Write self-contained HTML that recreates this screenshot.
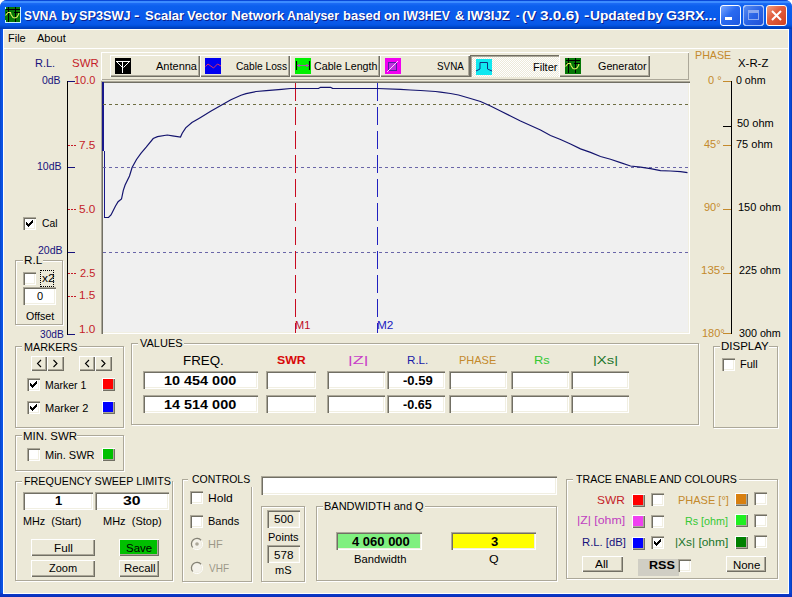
<!DOCTYPE html>
<html><head><meta charset="utf-8"><style>
html,body{margin:0;padding:0;width:792px;height:597px;overflow:hidden;background:#fff}
body{position:relative;font-family:"Liberation Sans",sans-serif}
div{position:absolute;box-sizing:border-box}
.t{white-space:pre;font-family:"Liberation Sans",sans-serif}
svg{position:absolute;overflow:visible}
</style></head><body>
<div style="left:0;top:0;width:792px;height:597px;background:#0A46D8;border-radius:7px 7px 0 0"></div>
<div style="left:0;top:0;width:792px;height:29px;border-radius:7px 7px 0 0;background:linear-gradient(to bottom,#0A48D8 0px,#0A48D8 1px,#3C8CFF 1px,#3C8CFF 3px,#1E6CF6 3px,#0C60EE 6px,#0A5CEC 14px,#0858E8 24px,#0050DC 26px,#0046C8 27px,#003CB4 29px)"></div>
<div style="left:0;top:29px;width:4px;height:568px;background:linear-gradient(to right,#0843C8,#0A55E8 2px,#0A52E3 3px)"></div>
<div style="left:788px;top:29px;width:4px;height:568px;background:linear-gradient(to right,#0A52E3,#0A4FE0 2px,#0638B8)"></div>
<div style="left:0;top:593px;width:792px;height:4px;background:linear-gradient(to bottom,#0A3ED0,#0A2FB8)"></div>
<div style="left:3px;top:29px;width:786px;height:565px;background:#fff"></div>
<div style="left:4px;top:30px;width:784px;height:563px;background:#ECE9D8"></div>
<svg width="16" height="16" viewBox="0 0 16 16" shape-rendering="crispEdges" style="left:5px;top:7px">
<rect x="0" y="0" width="16" height="16" fill="#067806"/>
<rect x="0" y="15" width="16" height="1" fill="#C8F0FF"/><rect x="15" y="0" width="1" height="16" fill="#C8F0FF"/><rect x="0" y="0" width="1" height="2" fill="#C8F0FF"/><rect x="0" y="13" width="1" height="3" fill="#C8F0FF"/>
<rect x="3" y="0" width="1" height="15" fill="#000"/><rect x="10" y="0" width="1" height="15" fill="#000"/>
<rect x="1" y="2" width="14" height="1" fill="#000"/><rect x="1" y="5" width="3" height="1" fill="#000"/><rect x="9" y="5" width="6" height="1" fill="#000"/>
<path d="M0.5 8.5 L3 5.5 L5.5 5.5 L6 7.5 L8 10.5 L10 11 L12 10 L13.5 7.5 L14 6" fill="none" stroke="#E0F060" stroke-width="1.1" shape-rendering="auto"/>
</svg>
<div class="t" style="left:24.09px;top:6px;color:#fff;font-size:13px;line-height:20px;font-weight:bold;transform:scaleX(0.9143);transform-origin:0 0;text-shadow:1px 1px #0A1E8C;">SVNA</div>
<div class="t" style="left:60.93px;top:6px;color:#fff;font-size:13px;line-height:20px;font-weight:bold;transform:scaleX(1.0714);transform-origin:0 0;text-shadow:1px 1px #0A1E8C;">by</div>
<div class="t" style="left:79.02px;top:6px;color:#fff;font-size:13px;line-height:20px;font-weight:bold;transform:scaleX(0.9804);transform-origin:0 0;text-shadow:1px 1px #0A1E8C;">SP3SWJ</div>
<div class="t" style="left:134.00px;top:6px;color:#fff;font-size:13px;line-height:20px;font-weight:bold;transform:scaleX(1.2500);transform-origin:0 0;text-shadow:1px 1px #0A1E8C;">-</div>
<div class="t" style="left:145.00px;top:6px;color:#fff;font-size:13px;line-height:20px;font-weight:bold;text-shadow:1px 1px #0A1E8C;">Scalar</div>
<div class="t" style="left:187.00px;top:6px;color:#fff;font-size:13px;line-height:20px;font-weight:bold;text-shadow:1px 1px #0A1E8C;">Vector</div>
<div class="t" style="left:230.96px;top:6px;color:#fff;font-size:13px;line-height:20px;font-weight:bold;transform:scaleX(1.0400);transform-origin:0 0;text-shadow:1px 1px #0A1E8C;">Network</div>
<div class="t" style="left:287.00px;top:6px;color:#fff;font-size:13px;line-height:20px;font-weight:bold;transform:scaleX(0.9455);transform-origin:0 0;text-shadow:1px 1px #0A1E8C;">Analyser</div>
<div class="t" style="left:343.00px;top:6px;color:#fff;font-size:13px;line-height:20px;font-weight:bold;text-shadow:1px 1px #0A1E8C;">based</div>
<div class="t" style="left:384.00px;top:6px;color:#fff;font-size:13px;line-height:20px;font-weight:bold;text-shadow:1px 1px #0A1E8C;">on</div>
<div class="t" style="left:403.06px;top:6px;color:#fff;font-size:13px;line-height:20px;font-weight:bold;transform:scaleX(0.9388);transform-origin:0 0;text-shadow:1px 1px #0A1E8C;">IW3HEV</div>
<div class="t" style="left:455.00px;top:6px;color:#fff;font-size:13px;line-height:20px;font-weight:bold;text-shadow:1px 1px #0A1E8C;">&amp;</div>
<div class="t" style="left:466.98px;top:6px;color:#fff;font-size:13px;line-height:20px;font-weight:bold;transform:scaleX(1.0244);transform-origin:0 0;text-shadow:1px 1px #0A1E8C;">IW3IJZ</div>
<div class="t" style="left:516.00px;top:6px;color:#fff;font-size:13px;line-height:20px;font-weight:bold;transform:scaleX(0.7500);transform-origin:0 0;text-shadow:1px 1px #0A1E8C;">-</div>
<div class="t" style="left:521.92px;top:6px;color:#fff;font-size:13px;line-height:20px;font-weight:bold;transform:scaleX(1.0833);transform-origin:0 0;text-shadow:1px 1px #0A1E8C;">(V</div>
<div class="t" style="left:540.00px;top:6px;color:#fff;font-size:13px;line-height:20px;font-weight:bold;transform:scaleX(1.1818);transform-origin:0 0;text-shadow:1px 1px #0A1E8C;">3.0.6)</div>
<div class="t" style="left:584.00px;top:6px;color:#fff;font-size:13px;line-height:20px;font-weight:bold;transform:scaleX(1.2500);transform-origin:0 0;text-shadow:1px 1px #0A1E8C;">-</div>
<div class="t" style="left:589.94px;top:6px;color:#fff;font-size:13px;line-height:20px;font-weight:bold;transform:scaleX(1.0600);transform-origin:0 0;text-shadow:1px 1px #0A1E8C;">Updated</div>
<div class="t" style="left:646.93px;top:6px;color:#fff;font-size:13px;line-height:20px;font-weight:bold;transform:scaleX(1.0714);transform-origin:0 0;text-shadow:1px 1px #0A1E8C;">by</div>
<div class="t" style="left:666.00px;top:6px;color:#fff;font-size:13px;line-height:20px;font-weight:bold;transform:scaleX(1.0889);transform-origin:0 0;text-shadow:1px 1px #0A1E8C;">G3RX...</div>
<div style="left:720px;top:5px;width:21px;height:21px;border:1px solid #fff;border-radius:3px;background:linear-gradient(135deg,#7AA8FF 0%,#2A6AF0 45%,#1E58E0 100%)"></div>
<div style="left:743px;top:5px;width:21px;height:21px;border:1px solid #fff;border-radius:3px;background:linear-gradient(135deg,#5A8CF0 0%,#2A64E6 50%,#2050D8 100%)"></div>
<div style="left:766px;top:5px;width:21px;height:21px;border:1px solid #fff;border-radius:3px;background:linear-gradient(135deg,#F0A080 0%,#E26040 40%,#D04020 100%)"></div>
<div style="left:743px;top:5px;width:21px;height:21px;border:1px solid #A8C4F8;border-radius:3px"></div>
<div style="left:725px;top:17px;width:7px;height:3px;background:#fff"></div>
<div style="left:748px;top:10px;width:11px;height:10px;border:1px solid #8CAAF0;border-top:3px solid #8CAAF0"></div>
<svg width="21" height="21" style="left:766px;top:5px"><path d="M6 6 L15 15 M15 6 L6 15" stroke="#fff" stroke-width="2"/></svg>
<div class="t" style="left:8.00px;top:28px;color:#000;font-size:11px;line-height:20px;">File</div>
<div class="t" style="left:37.00px;top:28px;color:#000;font-size:11px;line-height:20px;">About</div>
<div style="left:4px;top:48px;width:784px;height:1px;background:#fff"></div>
<div class="t" style="left:35.00px;top:53px;color:#16127C;font-size:11px;line-height:20px;">R.L.</div>
<div class="t" style="left:71.96px;top:53px;color:#C41C28;font-size:11px;line-height:20px;transform:scaleX(1.0417);transform-origin:0 0;">SWR</div>
<div style="left:67px;top:81px;width:1px;height:254px;background:#000"></div>
<div style="left:68px;top:81px;width:7px;height:1px;background:#16127C"></div>
<div class="t" style="left:42.00px;top:70px;color:#16127C;font-size:11px;line-height:20px;transform:scaleX(0.9474);transform-origin:0 0;">0dB</div>
<div class="t" style="left:74.00px;top:70px;color:#C41C28;font-size:11px;line-height:20px;">10.0</div>
<div style="left:68px;top:167px;width:7px;height:1px;background:#16127C"></div>
<div class="t" style="left:37.04px;top:156px;color:#16127C;font-size:11px;line-height:20px;transform:scaleX(0.9583);transform-origin:0 0;">10dB</div>
<div style="left:68px;top:145px;width:8px;height:1px;background:repeating-linear-gradient(to right,#C41C28 0 2px,transparent 2px 3px)"></div>
<div class="t" style="left:78.93px;top:135px;color:#C41C28;font-size:11px;line-height:20px;transform:scaleX(1.0714);transform-origin:0 0;">7.5</div>
<div style="left:68px;top:209px;width:8px;height:1px;background:repeating-linear-gradient(to right,#C41C28 0 2px,transparent 2px 3px)"></div>
<div class="t" style="left:78.93px;top:199px;color:#C41C28;font-size:11px;line-height:20px;transform:scaleX(1.0714);transform-origin:0 0;">5.0</div>
<div style="left:68px;top:252px;width:7px;height:1px;background:#16127C"></div>
<div class="t" style="left:38.00px;top:240px;color:#16127C;font-size:11px;line-height:20px;transform:scaleX(0.9600);transform-origin:0 0;">20dB</div>
<div style="left:68px;top:273px;width:8px;height:1px;background:repeating-linear-gradient(to right,#C41C28 0 2px,transparent 2px 3px)"></div>
<div class="t" style="left:80.00px;top:263px;color:#C41C28;font-size:11px;line-height:20px;">2.5</div>
<div style="left:68px;top:296px;width:8px;height:1px;background:repeating-linear-gradient(to right,#C41C28 0 2px,transparent 2px 3px)"></div>
<div class="t" style="left:78.93px;top:285px;color:#C41C28;font-size:11px;line-height:20px;transform:scaleX(1.0714);transform-origin:0 0;">1.5</div>
<div class="t" style="left:78.93px;top:319px;color:#C41C28;font-size:11px;line-height:20px;transform:scaleX(1.0714);transform-origin:0 0;">1.0</div>
<div style="left:68px;top:334px;width:7px;height:1px;background:#16127C"></div>
<div class="t" style="left:40.00px;top:324px;color:#16127C;font-size:11px;line-height:20px;transform:scaleX(0.9200);transform-origin:0 0;">30dB</div>
<div style="left:23px;top:217px;width:13px;height:13px;background:#fff;box-shadow:inset 1px 1px #ACA899, inset 2px 2px #716F64, inset -1px -1px #fff, inset -2px -2px #F1EFE2;"><svg width="13" height="13" style="position:absolute;left:0;top:0" shape-rendering="crispEdges"><path fill="#000" d="M9 3h1v1h-1zM8 4h1v1h-1zM9 4h1v1h-1zM3 5h1v1h-1zM7 5h1v1h-1zM8 5h1v1h-1zM9 5h1v1h-1zM3 6h1v1h-1zM4 6h1v1h-1zM6 6h1v1h-1zM7 6h1v1h-1zM8 6h1v1h-1zM3 7h1v1h-1zM4 7h1v1h-1zM5 7h1v1h-1zM6 7h1v1h-1zM7 7h1v1h-1zM4 8h1v1h-1zM5 8h1v1h-1zM6 8h1v1h-1zM5 9h1v1h-1z"/></svg></div>
<div class="t" style="left:42.00px;top:213px;color:#000;font-size:11px;line-height:20px;transform:scaleX(0.9375);transform-origin:0 0;">Cal</div>
<div style="left:15px;top:260px;width:48px;height:65px;border:1px solid #ACA899;"></div>
<div style="left:16px;top:261px;width:48px;height:65px;border:1px solid #fff;"></div>
<div style="left:15px;top:260px;width:48px;height:65px;border:1px solid #ACA899;border-right:0;border-bottom:0"></div>
<div style="left:62px;top:260px;width:1px;height:65px;background:#ACA899"></div>
<div style="left:15px;top:324px;width:48px;height:1px;background:#ACA899"></div>
<div style="left:23px;top:255px;width:20px;height:13px;background:#ECE9D8"></div>
<div class="t" style="left:23.94px;top:250px;color:#000;font-size:11px;line-height:20px;transform:scaleX(1.0625);transform-origin:0 0;">R.L</div>
<div style="left:23px;top:272px;width:13px;height:13px;background:#fff;box-shadow:inset 1px 1px #ACA899, inset 2px 2px #716F64, inset -1px -1px #fff, inset -2px -2px #F1EFE2;"></div>
<div class="t" style="left:42.00px;top:268px;color:#000;font-size:11px;line-height:20px;transform:scaleX(1.0909);transform-origin:0 0;">x2</div>
<div style="left:40px;top:270px;width:14px;height:17px;border:1px dotted #000"></div>
<div style="left:23px;top:287px;width:33px;height:18px;background:#fff;box-shadow:inset 1px 1px #ACA899, inset 2px 2px #716F64, inset -1px -1px #fff, inset -2px -2px #F1EFE2;"></div>
<div class="t" style="left:37.00px;top:286px;color:#000;font-size:11px;line-height:20px;">0</div>
<div class="t" style="left:26.00px;top:306px;color:#000;font-size:11px;line-height:20px;transform:scaleX(0.9655);transform-origin:0 0;">Offset</div>
<div style="left:101px;top:52px;width:588px;height:28px;box-shadow:inset 1px 1px #fff, inset -1px -1px #ACA899;"></div>
<div style="left:110px;top:55px;width:90px;height:22px;background:#ECE9D8;box-shadow:inset 1px 1px #fff, inset -1px -1px #716F64, inset -2px -2px #ACA899;"></div>
<svg width="16" height="16" style="left:115px;top:58px" shape-rendering="crispEdges"><rect width="16" height="16" fill="#000"/><path d="M1 3.5H15M1.5 3.5L7.5 9.5M14.5 3.5L8.5 9.5M7.5 3V15" stroke="#fff" stroke-width="1" fill="none" shape-rendering="auto"/></svg>
<div class="t" style="left:156.00px;top:56px;color:#000;font-size:11px;line-height:20px;">Antenna</div>
<div style="left:200px;top:55px;width:90px;height:22px;background:#ECE9D8;box-shadow:inset 1px 1px #fff, inset -1px -1px #716F64, inset -2px -2px #ACA899;"></div>
<svg width="16" height="16" style="left:205px;top:58px"><rect width="16" height="16" fill="#0000F0"/><path d="M0.5 8.5L3 6L8.5 10L12.5 6L16 8" stroke="#E03060" stroke-width="1" fill="none"/></svg>
<div class="t" style="left:236.00px;top:56px;color:#000;font-size:11px;line-height:20px;transform:scaleX(0.9273);transform-origin:0 0;">Cable Loss</div>
<div style="left:290px;top:55px;width:90px;height:22px;background:#ECE9D8;box-shadow:inset 1px 1px #fff, inset -1px -1px #716F64, inset -2px -2px #ACA899;"></div>
<svg width="16" height="16" style="left:295px;top:58px"><rect width="16" height="16" fill="#00F000"/><path d="M1.5 3V12M14.5 3V12" stroke="#000" stroke-width="1.2"/><path d="M2 7.5H14" stroke="#A060A0" stroke-width="1"/><circle cx="4" cy="7.5" r="1.3" fill="#C040C0"/><circle cx="12" cy="7.5" r="1.3" fill="#C040C0"/></svg>
<div class="t" style="left:314.00px;top:56px;color:#000;font-size:11px;line-height:20px;transform:scaleX(0.9692);transform-origin:0 0;">Cable Length</div>
<div style="left:380px;top:55px;width:90px;height:22px;background:#ECE9D8;box-shadow:inset 1px 1px #fff, inset -1px -1px #716F64, inset -2px -2px #ACA899;"></div>
<svg width="16" height="16" style="left:385px;top:58px"><rect width="16" height="16" fill="#F000F0"/><rect x="3.5" y="4.5" width="8" height="8" fill="#C030E0" stroke="#5020A0" stroke-width="1"/><path d="M2 14L13 3" stroke="#FFD0FF" stroke-width="1"/></svg>
<div class="t" style="left:437.10px;top:56px;color:#000;font-size:11px;line-height:20px;transform:scaleX(0.8966);transform-origin:0 0;">SVNA</div>
<div style="left:470px;top:55px;width:89px;height:22px;background:repeating-conic-gradient(#fff 0 25%, #ECE9D8 0 50%) 0 0/2px 2px;box-shadow:inset 1px 1px #716F64, inset 2px 2px #ACA899;"></div>
<svg width="16" height="16" style="left:476px;top:59px"><rect width="16" height="16" fill="#10E8F0"/><path d="M0 12L4 10V3.5H11.5V10L16 12" stroke="#103080" stroke-width="1" fill="none"/></svg>
<div class="t" style="left:533.00px;top:57px;color:#000;font-size:11px;line-height:20px;">Filter</div>
<div style="left:559px;top:55px;width:91px;height:22px;background:#ECE9D8;box-shadow:inset 1px 1px #fff, inset -1px -1px #716F64, inset -2px -2px #ACA899;"></div>
<svg width="16" height="16" viewBox="0 0 16 16" shape-rendering="crispEdges" style="left:565px;top:58px">
<rect x="0" y="0" width="16" height="16" fill="#067806"/>

<rect x="3" y="0" width="1" height="15" fill="#000"/><rect x="10" y="0" width="1" height="15" fill="#000"/>
<rect x="1" y="2" width="14" height="1" fill="#000"/><rect x="1" y="5" width="3" height="1" fill="#000"/><rect x="9" y="5" width="6" height="1" fill="#000"/>
<path d="M0.5 8.5 L3 5.5 L5.5 5.5 L6 7.5 L8 10.5 L10 11 L12 10 L13.5 7.5 L14 6" fill="none" stroke="#E0F060" stroke-width="1.1" shape-rendering="auto"/>
</svg>
<div class="t" style="left:598.00px;top:56px;color:#000;font-size:11px;line-height:20px;transform:scaleX(0.9796);transform-origin:0 0;">Generator</div>
<div style="left:101px;top:81px;width:589px;height:253px;background:#F0F0F0;box-shadow:inset 1px 1px #ACA899, inset 2px 2px #716F64, inset -1px -1px #fff, inset -2px -2px #F1EFE2;"></div>
<div style="left:102px;top:82px;width:2px;height:69px;background:#18188A"></div>
<div style="left:104px;top:151px;width:1px;height:67px;background:#18188A"></div>
<svg width="792" height="597" style="left:0;top:0">
<line x1="103" y1="104.5" x2="688" y2="104.5" stroke="#6E6E42" stroke-dasharray="3 3"/>
<line x1="103" y1="167.5" x2="688" y2="167.5" stroke="#6A66A8" stroke-dasharray="3 3"/>
<line x1="103" y1="252.5" x2="688" y2="252.5" stroke="#6A66A8" stroke-dasharray="3 3"/>
<line x1="295.5" y1="83" x2="295.5" y2="333" stroke="#C80A20" stroke-dasharray="18 6"/>
<line x1="377.5" y1="83" x2="377.5" y2="333" stroke="#2020C0" stroke-dasharray="18 6"/>
<polyline points="104.5,217.5 108.5,217.5 111.0,215.0 115.5,206.0 118.1,201.7 121.5,199.0 123.3,190.3 125.1,185.0 129.5,176.0 132.1,167.5 136.5,159.5 140.9,153.4 146.2,147.2 153.2,138.5 157.5,136.7 167.3,135.0 172.5,135.8 180.5,137.0 182.2,133.2 185.7,127.9 191.9,122.6 196.3,120.0 200.6,117.4 210.7,111.3 220.8,105.4 230.9,99.7 241.0,95.3 246.1,93.6 256.2,91.5 266.3,90.6 281.5,89.3 290.5,88.5 318.5,88.5 320.5,87.3 330.5,87.3 332.5,88.3 377.5,88.5 400.5,89.3 410.5,90.0 420.5,90.5 435.5,91.5 440.5,92.2 450.5,93.5 458.5,95.0 470.5,98.5 480.5,101.5 490.5,106.0 500.5,111.0 510.5,116.0 520.5,121.0 530.5,125.5 540.5,130.0 550.5,135.5 560.5,139.5 570.5,144.0 580.5,148.9 590.5,152.4 600.5,156.5 610.5,159.2 620.5,162.6 630.5,166.0 640.5,167.1 650.5,168.6 660.5,170.6 670.5,171.0 680.5,171.7 687.5,172.6" fill="none" stroke="#14146E" stroke-width="1.2"/>
</svg>
<div class="t" style="left:295.00px;top:315px;color:#BE0A1E;font-size:11px;line-height:20px;">M1</div>
<div class="t" style="left:376.93px;top:315px;color:#2020C0;font-size:11px;line-height:20px;transform:scaleX(1.0714);transform-origin:0 0;">M2</div>
<div style="left:731px;top:81px;width:1px;height:253px;background:#000"></div>
<div style="left:723px;top:81px;width:8px;height:1px;background:#C48A2C"></div>
<div style="left:723px;top:145px;width:8px;height:1px;background:#C48A2C"></div>
<div style="left:723px;top:209px;width:8px;height:1px;background:#C48A2C"></div>
<div style="left:723px;top:273px;width:8px;height:1px;background:#C48A2C"></div>
<div style="left:723px;top:333px;width:8px;height:1px;background:#C48A2C"></div>
<div style="left:723px;top:126px;width:8px;height:1px;background:#000"></div>
<div class="t" style="left:695.03px;top:45px;color:#C48A2C;font-size:11px;line-height:20px;transform:scaleX(0.9722);transform-origin:0 0;">PHASE</div>
<div class="t" style="left:738.00px;top:53px;color:#000;font-size:11px;line-height:20px;transform:scaleX(1.0345);transform-origin:0 0;">X-R-Z</div>
<div class="t" style="left:708.00px;top:70px;color:#C48A2C;font-size:11px;line-height:20px;">0 °</div>
<div class="t" style="left:736.00px;top:70px;color:#000;font-size:11px;line-height:20px;transform:scaleX(0.9667);transform-origin:0 0;">0 ohm</div>
<div class="t" style="left:737.00px;top:113px;color:#000;font-size:11px;line-height:20px;">50 ohm</div>
<div class="t" style="left:704.00px;top:134px;color:#C48A2C;font-size:11px;line-height:20px;">45°</div>
<div class="t" style="left:736.00px;top:134px;color:#000;font-size:11px;line-height:20px;">75 ohm</div>
<div class="t" style="left:704.00px;top:197px;color:#C48A2C;font-size:11px;line-height:20px;">90°</div>
<div class="t" style="left:738.00px;top:197px;color:#000;font-size:11px;line-height:20px;">150 ohm</div>
<div class="t" style="left:700.95px;top:260px;color:#C48A2C;font-size:11px;line-height:20px;transform:scaleX(1.0476);transform-origin:0 0;">135°</div>
<div class="t" style="left:739.00px;top:260px;color:#000;font-size:11px;line-height:20px;transform:scaleX(0.9762);transform-origin:0 0;">225 ohm</div>
<div class="t" style="left:702.00px;top:323px;color:#C48A2C;font-size:11px;line-height:20px;">180°</div>
<div class="t" style="left:739.00px;top:323px;color:#000;font-size:11px;line-height:20px;transform:scaleX(0.9762);transform-origin:0 0;">300 ohm</div>
<div style="left:15px;top:346px;width:109px;height:82px;border:1px solid #ACA899;"></div>
<div style="left:16px;top:347px;width:109px;height:82px;border:1px solid #fff;"></div>
<div style="left:15px;top:346px;width:109px;height:82px;border:1px solid #ACA899;border-right:0;border-bottom:0"></div>
<div style="left:123px;top:346px;width:1px;height:82px;background:#ACA899"></div>
<div style="left:15px;top:427px;width:109px;height:1px;background:#ACA899"></div>
<div style="left:22px;top:341px;width:57px;height:13px;background:#ECE9D8"></div>
<div class="t" style="left:24.02px;top:337px;color:#000;font-size:11px;line-height:20px;transform:scaleX(0.9811);transform-origin:0 0;">MARKERS</div>
<div style="left:31px;top:356px;width:16px;height:15px;background:#ECE9D8;box-shadow:inset 1px 1px #fff, inset -1px -1px #716F64, inset -2px -2px #ACA899;"></div>
<svg width="8" height="9" style="left:36px;top:359px"><path d="M5 1L1.5 4.5L5 8" stroke="#000" stroke-width="1.1" fill="none"/></svg>
<div style="left:47px;top:356px;width:17px;height:15px;background:#ECE9D8;box-shadow:inset 1px 1px #fff, inset -1px -1px #716F64, inset -2px -2px #ACA899;"></div>
<svg width="8" height="9" style="left:52px;top:359px"><path d="M1.5 1L5 4.5L1.5 8" stroke="#000" stroke-width="1.1" fill="none"/></svg>
<div style="left:79px;top:356px;width:16px;height:15px;background:#ECE9D8;box-shadow:inset 1px 1px #fff, inset -1px -1px #716F64, inset -2px -2px #ACA899;"></div>
<svg width="8" height="9" style="left:84px;top:359px"><path d="M5 1L1.5 4.5L5 8" stroke="#000" stroke-width="1.1" fill="none"/></svg>
<div style="left:95px;top:356px;width:17px;height:15px;background:#ECE9D8;box-shadow:inset 1px 1px #fff, inset -1px -1px #716F64, inset -2px -2px #ACA899;"></div>
<svg width="8" height="9" style="left:100px;top:359px"><path d="M1.5 1L5 4.5L1.5 8" stroke="#000" stroke-width="1.1" fill="none"/></svg>
<div style="left:27px;top:378px;width:13px;height:13px;background:#fff;box-shadow:inset 1px 1px #ACA899, inset 2px 2px #716F64, inset -1px -1px #fff, inset -2px -2px #F1EFE2;"><svg width="13" height="13" style="position:absolute;left:0;top:0" shape-rendering="crispEdges"><path fill="#000" d="M9 3h1v1h-1zM8 4h1v1h-1zM9 4h1v1h-1zM3 5h1v1h-1zM7 5h1v1h-1zM8 5h1v1h-1zM9 5h1v1h-1zM3 6h1v1h-1zM4 6h1v1h-1zM6 6h1v1h-1zM7 6h1v1h-1zM8 6h1v1h-1zM3 7h1v1h-1zM4 7h1v1h-1zM5 7h1v1h-1zM6 7h1v1h-1zM7 7h1v1h-1zM4 8h1v1h-1zM5 8h1v1h-1zM6 8h1v1h-1zM5 9h1v1h-1z"/></svg></div>
<div class="t" style="left:45.05px;top:375px;color:#000;font-size:11px;line-height:20px;transform:scaleX(0.9524);transform-origin:0 0;">Marker 1</div>
<div style="left:102px;top:378px;width:13px;height:13px;background:#FF0000;box-shadow:inset 1px 1px #fff, inset -1px -1px #716F64, inset -2px -2px #ACA899;"></div>
<div style="left:27px;top:401px;width:13px;height:13px;background:#fff;box-shadow:inset 1px 1px #ACA899, inset 2px 2px #716F64, inset -1px -1px #fff, inset -2px -2px #F1EFE2;"><svg width="13" height="13" style="position:absolute;left:0;top:0" shape-rendering="crispEdges"><path fill="#000" d="M9 3h1v1h-1zM8 4h1v1h-1zM9 4h1v1h-1zM3 5h1v1h-1zM7 5h1v1h-1zM8 5h1v1h-1zM9 5h1v1h-1zM3 6h1v1h-1zM4 6h1v1h-1zM6 6h1v1h-1zM7 6h1v1h-1zM8 6h1v1h-1zM3 7h1v1h-1zM4 7h1v1h-1zM5 7h1v1h-1zM6 7h1v1h-1zM7 7h1v1h-1zM4 8h1v1h-1zM5 8h1v1h-1zM6 8h1v1h-1zM5 9h1v1h-1z"/></svg></div>
<div class="t" style="left:45.00px;top:398px;color:#000;font-size:11px;line-height:20px;">Marker 2</div>
<div style="left:102px;top:401px;width:13px;height:13px;background:#0000FF;box-shadow:inset 1px 1px #fff, inset -1px -1px #716F64, inset -2px -2px #ACA899;"></div>
<div style="left:15px;top:435px;width:109px;height:36px;border:1px solid #ACA899;"></div>
<div style="left:16px;top:436px;width:109px;height:36px;border:1px solid #fff;"></div>
<div style="left:15px;top:435px;width:109px;height:36px;border:1px solid #ACA899;border-right:0;border-bottom:0"></div>
<div style="left:123px;top:435px;width:1px;height:36px;background:#ACA899"></div>
<div style="left:15px;top:470px;width:109px;height:1px;background:#ACA899"></div>
<div style="left:22px;top:430px;width:55px;height:13px;background:#ECE9D8"></div>
<div class="t" style="left:22.96px;top:426px;color:#000;font-size:11px;line-height:20px;transform:scaleX(1.0400);transform-origin:0 0;">MIN. SWR</div>
<div style="left:27px;top:448px;width:13px;height:13px;background:#fff;box-shadow:inset 1px 1px #ACA899, inset 2px 2px #716F64, inset -1px -1px #fff, inset -2px -2px #F1EFE2;"></div>
<div class="t" style="left:45.00px;top:445px;color:#000;font-size:11px;line-height:20px;">Min. SWR</div>
<div style="left:102px;top:448px;width:13px;height:13px;background:#00C000;box-shadow:inset 1px 1px #fff, inset -1px -1px #716F64, inset -2px -2px #ACA899;"></div>
<div style="left:15px;top:481px;width:158px;height:100px;border:1px solid #ACA899;"></div>
<div style="left:16px;top:482px;width:158px;height:100px;border:1px solid #fff;"></div>
<div style="left:15px;top:481px;width:158px;height:100px;border:1px solid #ACA899;border-right:0;border-bottom:0"></div>
<div style="left:172px;top:481px;width:1px;height:100px;background:#ACA899"></div>
<div style="left:15px;top:580px;width:158px;height:1px;background:#ACA899"></div>
<div style="left:22px;top:476px;width:150px;height:13px;background:#ECE9D8"></div>
<div class="t" style="left:24.02px;top:471px;color:#000;font-size:11px;line-height:20px;transform:scaleX(0.9799);transform-origin:0 0;">FREQUENCY SWEEP LIMITS</div>
<div style="left:23px;top:492px;width:70px;height:18px;background:#fff;box-shadow:inset 1px 1px #ACA899, inset 2px 2px #716F64, inset -1px -1px #fff, inset -2px -2px #F1EFE2;"></div>
<div class="t" style="left:55.00px;top:491px;color:#000;font-size:13px;line-height:20px;font-weight:bold;">1</div>
<div style="left:95px;top:492px;width:74px;height:18px;background:#fff;box-shadow:inset 1px 1px #ACA899, inset 2px 2px #716F64, inset -1px -1px #fff, inset -2px -2px #F1EFE2;"></div>
<div class="t" style="left:123.00px;top:491px;color:#000;font-size:13px;line-height:20px;font-weight:bold;transform:scaleX(1.2143);transform-origin:0 0;">30</div>
<div class="t" style="left:23.02px;top:511px;color:#000;font-size:11px;line-height:20px;transform:scaleX(0.9828);transform-origin:0 0;">MHz  (Start)</div>
<div class="t" style="left:103.00px;top:511px;color:#000;font-size:11px;line-height:20px;">MHz  (Stop)</div>
<div style="left:31px;top:539px;width:64px;height:17px;background:#ECE9D8;box-shadow:inset 1px 1px #fff, inset -1px -1px #716F64, inset -2px -2px #ACA899;"></div>
<div class="t" style="left:53.94px;top:538px;color:#000;font-size:11px;line-height:20px;transform:scaleX(1.0625);transform-origin:0 0;">Full</div>
<div style="left:31px;top:560px;width:64px;height:17px;background:#ECE9D8;box-shadow:inset 1px 1px #fff, inset -1px -1px #716F64, inset -2px -2px #ACA899;"></div>
<div class="t" style="left:49.00px;top:558px;color:#000;font-size:11px;line-height:20px;">Zoom</div>
<div style="left:119px;top:539px;width:40px;height:17px;background:#00C000;box-shadow:inset 1px 1px #fff, inset -1px -1px #716F64, inset -2px -2px #ACA899;"></div>
<div class="t" style="left:125.96px;top:538px;color:#000;font-size:11px;line-height:20px;transform:scaleX(1.0417);transform-origin:0 0;">Save</div>
<div style="left:119px;top:560px;width:40px;height:17px;background:#ECE9D8;box-shadow:inset 1px 1px #fff, inset -1px -1px #716F64, inset -2px -2px #ACA899;"></div>
<div class="t" style="left:123.97px;top:558px;color:#000;font-size:11px;line-height:20px;transform:scaleX(1.0345);transform-origin:0 0;">Recall</div>
<div style="left:131px;top:343px;width:568px;height:82px;border:1px solid #ACA899;"></div>
<div style="left:132px;top:344px;width:568px;height:82px;border:1px solid #fff;"></div>
<div style="left:131px;top:343px;width:568px;height:82px;border:1px solid #ACA899;border-right:0;border-bottom:0"></div>
<div style="left:698px;top:343px;width:1px;height:82px;background:#ACA899"></div>
<div style="left:131px;top:424px;width:568px;height:1px;background:#ACA899"></div>
<div style="left:138px;top:338px;width:46px;height:13px;background:#ECE9D8"></div>
<div class="t" style="left:140.00px;top:333px;color:#000;font-size:11px;line-height:20px;">VALUES</div>
<div class="t" style="left:182.97px;top:351px;color:#000;font-size:13px;line-height:20px;transform:scaleX(1.0263);transform-origin:0 0;">FREQ.</div>
<div class="t" style="left:277.00px;top:350px;color:#D80808;font-size:11px;line-height:20px;font-weight:bold;transform:scaleX(1.1200);transform-origin:0 0;">SWR</div>
<div class="t" style="left:348.36px;top:350px;color:#C83CC8;font-size:11px;line-height:20px;transform:scaleX(1.6364);transform-origin:0 0;">|Z|</div>
<div class="t" style="left:406.94px;top:350px;color:#1A1AA8;font-size:11px;line-height:20px;transform:scaleX(1.0556);transform-origin:0 0;">R.L.</div>
<div class="t" style="left:459.00px;top:350px;color:#C48A2C;font-size:11px;line-height:20px;">PHASE</div>
<div class="t" style="left:533.83px;top:350px;color:#34C834;font-size:11px;line-height:20px;transform:scaleX(1.1667);transform-origin:0 0;">Rs</div>
<div class="t" style="left:592.65px;top:350px;color:#187428;font-size:11px;line-height:20px;transform:scaleX(1.3529);transform-origin:0 0;">|Xs|</div>
<div style="left:143px;top:371px;width:115px;height:18px;background:#fff;box-shadow:inset 1px 1px #ACA899, inset 2px 2px #716F64, inset -1px -1px #fff, inset -2px -2px #F1EFE2;"></div>
<div style="left:266px;top:371px;width:50px;height:18px;background:#fff;box-shadow:inset 1px 1px #ACA899, inset 2px 2px #716F64, inset -1px -1px #fff, inset -2px -2px #F1EFE2;"></div>
<div style="left:327px;top:371px;width:58px;height:18px;background:#fff;box-shadow:inset 1px 1px #ACA899, inset 2px 2px #716F64, inset -1px -1px #fff, inset -2px -2px #F1EFE2;"></div>
<div style="left:387px;top:371px;width:58px;height:18px;background:#fff;box-shadow:inset 1px 1px #ACA899, inset 2px 2px #716F64, inset -1px -1px #fff, inset -2px -2px #F1EFE2;"></div>
<div style="left:449px;top:371px;width:58px;height:18px;background:#fff;box-shadow:inset 1px 1px #ACA899, inset 2px 2px #716F64, inset -1px -1px #fff, inset -2px -2px #F1EFE2;"></div>
<div style="left:511px;top:371px;width:58px;height:18px;background:#fff;box-shadow:inset 1px 1px #ACA899, inset 2px 2px #716F64, inset -1px -1px #fff, inset -2px -2px #F1EFE2;"></div>
<div style="left:571px;top:371px;width:58px;height:18px;background:#fff;box-shadow:inset 1px 1px #ACA899, inset 2px 2px #716F64, inset -1px -1px #fff, inset -2px -2px #F1EFE2;"></div>
<div style="left:143px;top:395px;width:115px;height:18px;background:#fff;box-shadow:inset 1px 1px #ACA899, inset 2px 2px #716F64, inset -1px -1px #fff, inset -2px -2px #F1EFE2;"></div>
<div style="left:266px;top:395px;width:50px;height:18px;background:#fff;box-shadow:inset 1px 1px #ACA899, inset 2px 2px #716F64, inset -1px -1px #fff, inset -2px -2px #F1EFE2;"></div>
<div style="left:327px;top:395px;width:58px;height:18px;background:#fff;box-shadow:inset 1px 1px #ACA899, inset 2px 2px #716F64, inset -1px -1px #fff, inset -2px -2px #F1EFE2;"></div>
<div style="left:387px;top:395px;width:58px;height:18px;background:#fff;box-shadow:inset 1px 1px #ACA899, inset 2px 2px #716F64, inset -1px -1px #fff, inset -2px -2px #F1EFE2;"></div>
<div style="left:449px;top:395px;width:58px;height:18px;background:#fff;box-shadow:inset 1px 1px #ACA899, inset 2px 2px #716F64, inset -1px -1px #fff, inset -2px -2px #F1EFE2;"></div>
<div style="left:511px;top:395px;width:58px;height:18px;background:#fff;box-shadow:inset 1px 1px #ACA899, inset 2px 2px #716F64, inset -1px -1px #fff, inset -2px -2px #F1EFE2;"></div>
<div style="left:571px;top:395px;width:58px;height:18px;background:#fff;box-shadow:inset 1px 1px #ACA899, inset 2px 2px #716F64, inset -1px -1px #fff, inset -2px -2px #F1EFE2;"></div>
<div class="t" style="left:163.89px;top:371px;color:#000;font-size:13px;line-height:20px;font-weight:bold;transform:scaleX(1.1094);transform-origin:0 0;">10 454 000</div>
<div class="t" style="left:163.89px;top:395px;color:#000;font-size:13px;line-height:20px;font-weight:bold;transform:scaleX(1.1094);transform-origin:0 0;">14 514 000</div>
<div class="t" style="left:403.00px;top:371px;color:#000;font-size:13px;line-height:20px;font-weight:bold;">-0.59</div>
<div class="t" style="left:403.00px;top:395px;color:#000;font-size:13px;line-height:20px;font-weight:bold;transform:scaleX(0.9667);transform-origin:0 0;">-0.65</div>
<div style="left:713px;top:346px;width:65px;height:82px;border:1px solid #ACA899;"></div>
<div style="left:714px;top:347px;width:65px;height:82px;border:1px solid #fff;"></div>
<div style="left:713px;top:346px;width:65px;height:82px;border:1px solid #ACA899;border-right:0;border-bottom:0"></div>
<div style="left:777px;top:346px;width:1px;height:82px;background:#ACA899"></div>
<div style="left:713px;top:427px;width:65px;height:1px;background:#ACA899"></div>
<div style="left:720px;top:341px;width:49px;height:13px;background:#ECE9D8"></div>
<div class="t" style="left:720.95px;top:336px;color:#000;font-size:11px;line-height:20px;transform:scaleX(1.0455);transform-origin:0 0;">DISPLAY</div>
<div style="left:722px;top:358px;width:13px;height:13px;background:#fff;box-shadow:inset 1px 1px #ACA899, inset 2px 2px #716F64, inset -1px -1px #fff, inset -2px -2px #F1EFE2;"></div>
<div class="t" style="left:740.00px;top:354px;color:#000;font-size:11px;line-height:20px;">Full</div>
<div style="left:182px;top:479px;width:70px;height:103px;border:1px solid #ACA899;"></div>
<div style="left:183px;top:480px;width:70px;height:103px;border:1px solid #fff;"></div>
<div style="left:182px;top:479px;width:70px;height:103px;border:1px solid #ACA899;border-right:0;border-bottom:0"></div>
<div style="left:251px;top:479px;width:1px;height:103px;background:#ACA899"></div>
<div style="left:182px;top:581px;width:70px;height:1px;background:#ACA899"></div>
<div style="left:188px;top:474px;width:67px;height:13px;background:#ECE9D8"></div>
<div class="t" style="left:192.00px;top:469px;color:#000;font-size:11px;line-height:20px;transform:scaleX(0.9508);transform-origin:0 0;">CONTROLS</div>
<div style="left:190px;top:491px;width:13px;height:13px;background:#fff;box-shadow:inset 1px 1px #ACA899, inset 2px 2px #716F64, inset -1px -1px #fff, inset -2px -2px #F1EFE2;"></div>
<div class="t" style="left:207.90px;top:488px;color:#000;font-size:11px;line-height:20px;transform:scaleX(1.0952);transform-origin:0 0;">Hold</div>
<div style="left:190px;top:515px;width:13px;height:13px;background:#fff;box-shadow:inset 1px 1px #ACA899, inset 2px 2px #716F64, inset -1px -1px #fff, inset -2px -2px #F1EFE2;"></div>
<div class="t" style="left:208.00px;top:511px;color:#000;font-size:11px;line-height:20px;">Bands</div>
<svg width="12" height="12" style="left:191px;top:538px"><circle cx="6" cy="6" r="4.5" fill="#F4F2EA"/><path d="M10.2 2.3A5.5 5.5 0 0 0 1.8 9.7" stroke="#716F64" stroke-width="1.2" fill="none" opacity="0.85"/><path d="M1.8 9.7A5.5 5.5 0 0 0 10.2 2.3" stroke="#fff" fill="none"/><circle cx="6" cy="6" r="1.8" fill="#ACA899"/></svg>
<div class="t" style="left:208.00px;top:534px;color:#9C9888;font-size:11px;line-height:20px;">HF</div>
<svg width="12" height="12" style="left:191px;top:562px"><circle cx="6" cy="6" r="4.5" fill="#F4F2EA"/><path d="M10.2 2.3A5.5 5.5 0 0 0 1.8 9.7" stroke="#716F64" stroke-width="1.2" fill="none" opacity="0.85"/><path d="M1.8 9.7A5.5 5.5 0 0 0 10.2 2.3" stroke="#fff" fill="none"/></svg>
<div class="t" style="left:209.00px;top:558px;color:#9C9888;font-size:11px;line-height:20px;transform:scaleX(0.9091);transform-origin:0 0;">VHF</div>
<div style="left:261px;top:476px;width:296px;height:19px;background:#fff;box-shadow:inset 1px 1px #ACA899, inset 2px 2px #716F64, inset -1px -1px #fff, inset -2px -2px #F1EFE2;"></div>
<div style="left:261px;top:506px;width:44px;height:76px;border:1px solid #ACA899;"></div>
<div style="left:262px;top:507px;width:44px;height:76px;border:1px solid #fff;"></div>
<div style="left:261px;top:506px;width:44px;height:76px;border:1px solid #ACA899;border-right:0;border-bottom:0"></div>
<div style="left:304px;top:506px;width:1px;height:76px;background:#ACA899"></div>
<div style="left:261px;top:581px;width:44px;height:1px;background:#ACA899"></div>
<div style="left:267px;top:510px;width:33px;height:18px;background:#ECE9D8;box-shadow:inset 1px 1px #ACA899, inset 2px 2px #716F64, inset -1px -1px #fff, inset -2px -2px #F1EFE2;"></div>
<div class="t" style="left:273.94px;top:509px;color:#000;font-size:11px;line-height:20px;transform:scaleX(1.0588);transform-origin:0 0;">500</div>
<div class="t" style="left:268.00px;top:527px;color:#000;font-size:11px;line-height:20px;">Points</div>
<div style="left:267px;top:545px;width:33px;height:18px;background:#ECE9D8;box-shadow:inset 1px 1px #ACA899, inset 2px 2px #716F64, inset -1px -1px #fff, inset -2px -2px #F1EFE2;"></div>
<div class="t" style="left:273.94px;top:545px;color:#000;font-size:11px;line-height:20px;transform:scaleX(1.0588);transform-origin:0 0;">578</div>
<div class="t" style="left:275.00px;top:560px;color:#000;font-size:11px;line-height:20px;">mS</div>
<div style="left:316px;top:506px;width:241px;height:75px;border:1px solid #ACA899;"></div>
<div style="left:317px;top:507px;width:241px;height:75px;border:1px solid #fff;"></div>
<div style="left:316px;top:506px;width:241px;height:75px;border:1px solid #ACA899;border-right:0;border-bottom:0"></div>
<div style="left:556px;top:506px;width:1px;height:75px;background:#ACA899"></div>
<div style="left:316px;top:580px;width:241px;height:1px;background:#ACA899"></div>
<div style="left:323px;top:501px;width:102px;height:13px;background:#ECE9D8"></div>
<div class="t" style="left:324.00px;top:496px;color:#000;font-size:11px;line-height:20px;">BANDWIDTH and Q</div>
<div style="left:336px;top:532px;width:86px;height:18px;background:#80F080;box-shadow:inset 1px 1px #ACA899, inset 2px 2px #716F64, inset -1px -1px #fff, inset -2px -2px #F1EFE2;"></div>
<div class="t" style="left:352.00px;top:532px;color:#000;font-size:13px;line-height:20px;font-weight:bold;">4 060 000</div>
<div class="t" style="left:353.98px;top:549px;color:#000;font-size:11px;line-height:20px;transform:scaleX(1.0200);transform-origin:0 0;">Bandwidth</div>
<div style="left:451px;top:532px;width:85px;height:18px;background:#FFFF00;box-shadow:inset 1px 1px #ACA899, inset 2px 2px #716F64, inset -1px -1px #fff, inset -2px -2px #F1EFE2;"></div>
<div class="t" style="left:491.00px;top:532px;color:#000;font-size:13px;line-height:20px;font-weight:bold;">3</div>
<div class="t" style="left:489.00px;top:549px;color:#000;font-size:11px;line-height:20px;transform:scaleX(1.1250);transform-origin:0 0;">Q</div>
<div style="left:566px;top:479px;width:212px;height:100px;border:1px solid #ACA899;"></div>
<div style="left:567px;top:480px;width:212px;height:100px;border:1px solid #fff;"></div>
<div style="left:566px;top:479px;width:212px;height:100px;border:1px solid #ACA899;border-right:0;border-bottom:0"></div>
<div style="left:777px;top:479px;width:1px;height:100px;background:#ACA899"></div>
<div style="left:566px;top:578px;width:212px;height:1px;background:#ACA899"></div>
<div style="left:573px;top:474px;width:166px;height:13px;background:#ECE9D8"></div>
<div class="t" style="left:576.00px;top:469px;color:#000;font-size:11px;line-height:20px;transform:scaleX(0.9641);transform-origin:0 0;">TRACE ENABLE AND COLOURS</div>
<div class="t" style="left:596.92px;top:490px;color:#C41C28;font-size:11px;line-height:20px;transform:scaleX(1.0833);transform-origin:0 0;">SWR</div>
<div style="left:632px;top:494px;width:13px;height:13px;background:#FF0000;box-shadow:inset 1px 1px #fff, inset -1px -1px #716F64, inset -2px -2px #ACA899;"></div>
<div style="left:651px;top:493px;width:13px;height:13px;background:#fff;box-shadow:inset 1px 1px #ACA899, inset 2px 2px #716F64, inset -1px -1px #fff, inset -2px -2px #F1EFE2;"></div>
<div class="t" style="left:576.88px;top:510px;color:#C040C0;font-size:11px;line-height:20px;transform:scaleX(1.1190);transform-origin:0 0;">|Z| [ohm]</div>
<div style="left:632px;top:515px;width:13px;height:13px;background:#F040F0;box-shadow:inset 1px 1px #fff, inset -1px -1px #716F64, inset -2px -2px #ACA899;"></div>
<div style="left:651px;top:515px;width:13px;height:13px;background:#fff;box-shadow:inset 1px 1px #ACA899, inset 2px 2px #716F64, inset -1px -1px #fff, inset -2px -2px #F1EFE2;"></div>
<div class="t" style="left:581.98px;top:532px;color:#16127C;font-size:11px;line-height:20px;transform:scaleX(1.0244);transform-origin:0 0;">R.L. [dB]</div>
<div style="left:632px;top:537px;width:13px;height:13px;background:#0000FF;box-shadow:inset 1px 1px #fff, inset -1px -1px #716F64, inset -2px -2px #ACA899;"></div>
<div style="left:651px;top:536px;width:13px;height:13px;background:#fff;box-shadow:inset 1px 1px #ACA899, inset 2px 2px #716F64, inset -1px -1px #fff, inset -2px -2px #F1EFE2;"><svg width="13" height="13" style="position:absolute;left:0;top:0" shape-rendering="crispEdges"><path fill="#000" d="M9 3h1v1h-1zM8 4h1v1h-1zM9 4h1v1h-1zM3 5h1v1h-1zM7 5h1v1h-1zM8 5h1v1h-1zM9 5h1v1h-1zM3 6h1v1h-1zM4 6h1v1h-1zM6 6h1v1h-1zM7 6h1v1h-1zM8 6h1v1h-1zM3 7h1v1h-1zM4 7h1v1h-1zM5 7h1v1h-1zM6 7h1v1h-1zM7 7h1v1h-1zM4 8h1v1h-1zM5 8h1v1h-1zM6 8h1v1h-1zM5 9h1v1h-1z"/></svg></div>
<div class="t" style="left:678.00px;top:490px;color:#C48A2C;font-size:11px;line-height:20px;">PHASE [°]</div>
<div style="left:735px;top:493px;width:13px;height:13px;background:#D88010;box-shadow:inset 1px 1px #fff, inset -1px -1px #716F64, inset -2px -2px #ACA899;"></div>
<div style="left:754px;top:492px;width:13px;height:13px;background:#fff;box-shadow:inset 1px 1px #ACA899, inset 2px 2px #716F64, inset -1px -1px #fff, inset -2px -2px #F1EFE2;"></div>
<div class="t" style="left:685.02px;top:511px;color:#34C834;font-size:11px;line-height:20px;transform:scaleX(0.9767);transform-origin:0 0;">Rs [ohm]</div>
<div style="left:735px;top:514px;width:13px;height:13px;background:#20F020;box-shadow:inset 1px 1px #fff, inset -1px -1px #716F64, inset -2px -2px #ACA899;"></div>
<div style="left:754px;top:514px;width:13px;height:13px;background:#fff;box-shadow:inset 1px 1px #ACA899, inset 2px 2px #716F64, inset -1px -1px #fff, inset -2px -2px #F1EFE2;"></div>
<div class="t" style="left:674.92px;top:532px;color:#187428;font-size:11px;line-height:20px;transform:scaleX(1.0833);transform-origin:0 0;">|Xs| [ohm]</div>
<div style="left:735px;top:536px;width:13px;height:13px;background:#008000;box-shadow:inset 1px 1px #fff, inset -1px -1px #716F64, inset -2px -2px #ACA899;"></div>
<div style="left:754px;top:535px;width:13px;height:13px;background:#fff;box-shadow:inset 1px 1px #ACA899, inset 2px 2px #716F64, inset -1px -1px #fff, inset -2px -2px #F1EFE2;"></div>
<div style="left:582px;top:556px;width:41px;height:16px;background:#ECE9D8;box-shadow:inset 1px 1px #fff, inset -1px -1px #716F64, inset -2px -2px #ACA899;"></div>
<div class="t" style="left:595.00px;top:554px;color:#000;font-size:11px;line-height:20px;transform:scaleX(1.0833);transform-origin:0 0;">All</div>
<div style="left:638px;top:559px;width:41px;height:17px;background:#D0CEC4"></div>
<div class="t" style="left:648.86px;top:555px;color:#000;font-size:11px;line-height:20px;font-weight:bold;transform:scaleX(1.1429);transform-origin:0 0;">RSS</div>
<div style="left:678px;top:559px;width:13px;height:13px;background:#fff;box-shadow:inset 1px 1px #ACA899, inset 2px 2px #716F64, inset -1px -1px #fff, inset -2px -2px #F1EFE2;"></div>
<div style="left:726px;top:556px;width:40px;height:16px;background:#ECE9D8;box-shadow:inset 1px 1px #fff, inset -1px -1px #716F64, inset -2px -2px #ACA899;"></div>
<div class="t" style="left:732.96px;top:555px;color:#000;font-size:11px;line-height:20px;transform:scaleX(1.0400);transform-origin:0 0;">None</div>
</body></html>
